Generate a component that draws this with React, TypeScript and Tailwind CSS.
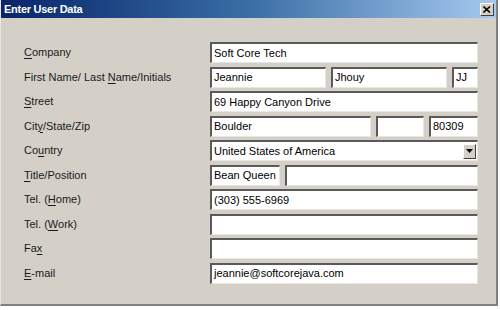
import React from 'react';

const font = { fontFamily: '"Liberation Sans", Arial, sans-serif' };

const Box: React.FC<{ value?: string; className?: string }> = ({ value = '', className = '' }) => (
  <div className={`h-full bg-white border-t-2 border-l-2 border-t-[#5a5a5a] border-l-[#5a5a5a] border-b border-r border-b-[#e8e6e0] border-r-[#e8e6e0] flex items-center pl-[2px] text-[11px] text-black overflow-hidden whitespace-nowrap ${className}`}>
    {value}
  </div>
);

const Label: React.FC<{ children: React.ReactNode }> = ({ children }) => (
  <div className="w-[186px] shrink-0 text-[11px] text-[#1a1a1a]">{children}</div>
);

const U: React.FC<{ children: React.ReactNode }> = ({ children }) => <span className="underline underline-offset-[2px]">{children}</span>;

export default function App() {
  return (
    <div className="w-[500px] h-[310px] bg-white overflow-hidden" style={font}>
      <div className="w-[498px] h-[306px] bg-[#d4d0c8] border-r-2 border-b-2 border-r-[#808080] border-b-[#808080] border-l border-l-[#e8e6e0] flex flex-col">
        <div className="h-[18px] bg-gradient-to-r from-[#0a246a] via-[#3a6ea5] to-[#a6caf0] flex items-center justify-between pl-[3px] pr-[2px]">
          <span className="text-white font-bold text-[11px] tracking-tight">Enter User Data</span>
          <div className="w-[14px] h-[13px] bg-[#d4d0c8] border-t border-l border-t-white border-l-white border-b border-r border-b-[#404040] border-r-[#404040] flex items-center justify-center">
            <svg width="8" height="7" viewBox="0 0 8 7">
              <path d="M0.5 0.5 L7 6.5 M7 0.5 L0.5 6.5" stroke="black" strokeWidth="1.6" />
            </svg>
          </div>
        </div>
        <div className="flex flex-col gap-[3.5px] pl-[23px] pt-[24px] pr-[18px]">
          <div className="flex items-center h-[21px]">
            <Label><U>C</U>ompany</Label>
            <Box value="Soft Core Tech" className="flex-1" />
          </div>
          <div className="flex items-center h-[21px]">
            <Label>First Name/ Last <U>N</U>ame/Initials</Label>
            <div className="flex-1 h-full flex gap-[5px]">
              <Box value="Jeannie" className="w-[116px]" />
              <Box value="Jhouy" className="w-[116px]" />
              <Box value="JJ" className="flex-1" />
            </div>
          </div>
          <div className="flex items-center h-[21px]">
            <Label><U>S</U>treet</Label>
            <Box value="69 Happy Canyon Drive" className="flex-1" />
          </div>
          <div className="flex items-center h-[21px]">
            <Label>Cit<U>y</U>/State/Zip</Label>
            <div className="flex-1 h-full flex gap-[5px]">
              <Box value="Boulder" className="w-[161px]" />
              <Box className="w-[48px]" />
              <Box value="80309" className="flex-1" />
            </div>
          </div>
          <div className="flex items-center h-[21px]">
            <Label>Co<U>u</U>ntry</Label>
            <div className="flex-1 h-full bg-white border-t-2 border-l-2 border-t-[#5a5a5a] border-l-[#5a5a5a] border-b border-r border-b-[#e8e6e0] border-r-[#e8e6e0] flex items-center pl-[2px] text-[11px]">
              <span className="flex-1">United States of America</span>
              <div className="w-[13px] h-[15px] mr-[1px] bg-[#d4d0c8] border-t border-l border-t-white border-l-white border-b border-r border-b-[#404040] border-r-[#404040] flex items-center justify-center">
                <svg width="7" height="4" viewBox="0 0 7 4"><path d="M0 0 H7 L3.5 4 Z" fill="black" /></svg>
              </div>
            </div>
          </div>
          <div className="flex items-center h-[21px]">
            <Label><U>T</U>itle/Position</Label>
            <div className="flex-1 h-full flex gap-[5px]">
              <Box value="Bean Queen" className="w-[70px]" />
              <Box className="flex-1" />
            </div>
          </div>
          <div className="flex items-center h-[21px]">
            <Label>Tel. (<U>H</U>ome)</Label>
            <Box value="(303) 555-6969" className="flex-1" />
          </div>
          <div className="flex items-center h-[21px]">
            <Label>Tel. (<U>W</U>ork)</Label>
            <Box className="flex-1" />
          </div>
          <div className="flex items-center h-[21px]">
            <Label>Fa<U>x</U></Label>
            <Box className="flex-1" />
          </div>
          <div className="flex items-center h-[21px]">
            <Label><U>E</U>-mail</Label>
            <Box value="jeannie@softcorejava.com" className="flex-1" />
          </div>
        </div>
      </div>
    </div>
  );
}
